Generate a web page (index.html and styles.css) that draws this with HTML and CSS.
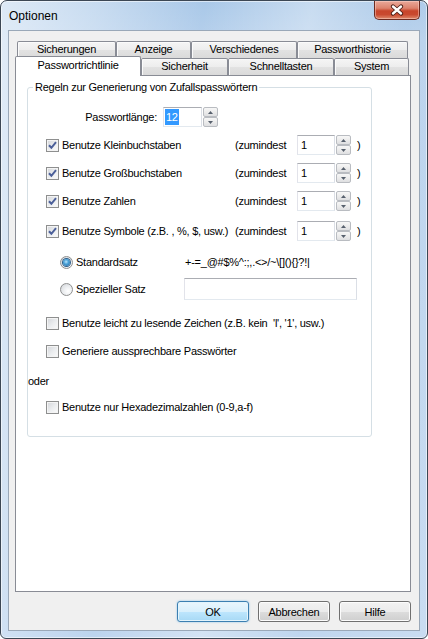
FILE: index.html
```html
<!DOCTYPE html>
<html lang="de">
<head>
<meta charset="utf-8">
<title>Optionen</title>
<link rel="stylesheet" href="styles.css">
</head>
<body>
<div class="window">
  <div class="titlebar">
    <span class="title">Optionen</span>
    <button class="close" aria-label="Schließen">
      <svg width="16" height="12" viewBox="0 0 16 12"><path d="M4 2.5 L12 9.5 M12 2.5 L4 9.5" stroke="#4a1d15" stroke-width="4.2" stroke-linecap="round"/><path d="M4 2.5 L12 9.5 M12 2.5 L4 9.5" stroke="#fff" stroke-width="2.4" stroke-linecap="round"/></svg>
    </button>
  </div>
  <div class="client">
    <div class="tabs">
      <div class="tabrow back">
        <div class="tab t-sicherungen">Sicherungen</div>
        <div class="tab t-anzeige">Anzeige</div>
        <div class="tab t-versch">Verschiedenes</div>
        <div class="tab t-historie">Passworthistorie</div>
      </div>
      <div class="tabrow front">
        <div class="tab active t-richtlinie">Passwortrichtlinie</div>
        <div class="tab t-sicherheit">Sicherheit</div>
        <div class="tab t-schnell">Schnelltasten</div>
        <div class="tab t-system">System</div>
      </div>
      <div class="panel">
        <fieldset class="group">
          <legend>Regeln zur Generierung von Zufallspasswörtern</legend>

          <div class="row r-pw">
            <span class="pwlabel">Passwortlänge:</span>
            <div class="field pwfield"><span class="sel">12</span></div>
            <div class="spin"><span class="sb"><svg width="5" height="3" viewBox="0 0 5 3"><path d="M0 3 L2.5 0 L5 3Z" fill="#57606d"/></svg></span><span class="sb"><svg width="5" height="3" viewBox="0 0 5 3"><path d="M0 0 L2.5 3 L5 0Z" fill="#57606d"/></svg></span></div>
          </div>

          <div class="row cbrow r-c1">
            <label class="opt"><span class="cb"><svg width="11" height="11" viewBox="0 0 11 11"><path d="M2 5.2 L4.4 7.8 L9 2.2" fill="none" stroke="#4b5f99" stroke-width="2"/></svg></span><span>Benutze Kleinbuchstaben</span></label>
            <span class="zum">(zumindest</span>
            <div class="field num">1</div>
            <div class="spin"><span class="sb"><svg width="5" height="3" viewBox="0 0 5 3"><path d="M0 3 L2.5 0 L5 3Z" fill="#57606d"/></svg></span><span class="sb"><svg width="5" height="3" viewBox="0 0 5 3"><path d="M0 0 L2.5 3 L5 0Z" fill="#57606d"/></svg></span></div>
            <span class="paren">)</span>
          </div>

          <div class="row cbrow r-c2">
            <label class="opt"><span class="cb"><svg width="11" height="11" viewBox="0 0 11 11"><path d="M2 5.2 L4.4 7.8 L9 2.2" fill="none" stroke="#4b5f99" stroke-width="2"/></svg></span><span>Benutze Großbuchstaben</span></label>
            <span class="zum">(zumindest</span>
            <div class="field num">1</div>
            <div class="spin"><span class="sb"><svg width="5" height="3" viewBox="0 0 5 3"><path d="M0 3 L2.5 0 L5 3Z" fill="#57606d"/></svg></span><span class="sb"><svg width="5" height="3" viewBox="0 0 5 3"><path d="M0 0 L2.5 3 L5 0Z" fill="#57606d"/></svg></span></div>
            <span class="paren">)</span>
          </div>

          <div class="row cbrow r-c3">
            <label class="opt"><span class="cb"><svg width="11" height="11" viewBox="0 0 11 11"><path d="M2 5.2 L4.4 7.8 L9 2.2" fill="none" stroke="#4b5f99" stroke-width="2"/></svg></span><span>Benutze Zahlen</span></label>
            <span class="zum">(zumindest</span>
            <div class="field num">1</div>
            <div class="spin"><span class="sb"><svg width="5" height="3" viewBox="0 0 5 3"><path d="M0 3 L2.5 0 L5 3Z" fill="#57606d"/></svg></span><span class="sb"><svg width="5" height="3" viewBox="0 0 5 3"><path d="M0 0 L2.5 3 L5 0Z" fill="#57606d"/></svg></span></div>
            <span class="paren">)</span>
          </div>

          <div class="row cbrow r-c4">
            <label class="opt"><span class="cb"><svg width="11" height="11" viewBox="0 0 11 11"><path d="M2 5.2 L4.4 7.8 L9 2.2" fill="none" stroke="#4b5f99" stroke-width="2"/></svg></span><span>Benutze Symbole (z.B. , %, $, usw.)</span></label>
            <span class="zum">(zumindest</span>
            <div class="field num">1</div>
            <div class="spin"><span class="sb"><svg width="5" height="3" viewBox="0 0 5 3"><path d="M0 3 L2.5 0 L5 3Z" fill="#57606d"/></svg></span><span class="sb"><svg width="5" height="3" viewBox="0 0 5 3"><path d="M0 0 L2.5 3 L5 0Z" fill="#57606d"/></svg></span></div>
            <span class="paren">)</span>
          </div>

          <div class="row rbrow r-r1">
            <label class="opt2"><span class="rb on"><span class="dot"></span></span><span>Standardsatz</span></label>
            <span class="symbols">+-=_@#$%^:;,.&lt;&gt;/~\[](){}?!|</span>
          </div>

          <div class="row rbrow r-r2">
            <label class="opt2"><span class="rb"></span><span>Spezieller Satz</span></label>
            <div class="field wide"></div>
          </div>

          <div class="row cbrow r-c5">
            <label class="opt"><span class="cb"></span><span>Benutze leicht zu lesende Zeichen (z.B. kein &nbsp;'l', '1', usw.)</span></label>
          </div>

          <div class="row cbrow r-c6">
            <label class="opt"><span class="cb"></span><span>Generiere aussprechbare Passwörter</span></label>
          </div>

          <div class="row r-oder">oder</div>

          <div class="row cbrow r-c7">
            <label class="opt"><span class="cb"></span><span>Benutze nur Hexadezimalzahlen (0-9,a-f)</span></label>
          </div>
        </fieldset>
      </div>
    </div>
    <div class="buttons">
      <button class="btn default">OK</button>
      <button class="btn">Abbrechen</button>
      <button class="btn">Hilfe</button>
    </div>
  </div>
</div>
</body>
</html>
```

FILE: styles.css
```css
* { box-sizing: border-box; }
html, body { margin: 0; padding: 0; }
body {
  width: 428px;
  height: 639px;
  overflow: hidden;
  background: #ffffff;
  font-family: "Liberation Sans", Arial, sans-serif;
  font-size: 11px;
  letter-spacing: -0.25px;
  color: #000;
}

.window {
  width: 428px;
  height: 639px;
  border: 1px solid #3c4754;
  border-radius: 7px 7px 6px 6px;
  background:
    linear-gradient(100deg, rgba(255,255,255,0.6) 0%, rgba(255,255,255,0.35) 18%, rgba(255,255,255,0) 38%, rgba(255,255,255,0.35) 58%, rgba(255,255,255,0.05) 76%, rgba(255,255,255,0.2) 100%),
    linear-gradient(180deg, #a9c8e8 0%, #b6d0ec 6%, #bcd4ee 100%);
  box-shadow: inset 0 0 0 1px rgba(255,255,255,0.55);
  display: flex;
  flex-direction: column;
}

.titlebar {
  height: 29px;
  display: flex;
  align-items: flex-start;
  flex: none;
}
.title {
  margin: 8px 0 0 8px;
  font-size: 12px;
  line-height: 15px;
  letter-spacing: 0;
  color: #000;
}
.close {
  margin: 0 7px 0 auto;
  width: 46px;
  height: 19px;
  padding: 0;
  border: 1px solid #6b2a20;
  border-top: none;
  border-radius: 0 0 5px 5px;
  background: linear-gradient(180deg, #e9a99a 0%, #dc826d 40%, #c8452b 55%, #c9492f 75%, #df8a6c 100%);
  box-shadow: inset 0 0 0 1px rgba(255,220,210,0.45);
  display: flex;
  align-items: center;
  justify-content: center;
}

.client {
  flex: 1;
  margin: 0 7px 7px 7px;
  border: 1px solid #9aa8b8;
  background: #f0f0f0;
  padding: 10px 8px 0 6px;
  display: flex;
  flex-direction: column;
}

.tabs { width: 396px; }
.tabrow {
  display: flex;
  height: 17px;
}
.tabrow.back { padding-left: 2px; }
.tabrow.front { align-items: flex-end; }

.tab {
  height: 17px;
  border: 1px solid #898c95;
  border-bottom: none;
  border-radius: 2px 2px 0 0;
  background: linear-gradient(180deg, #f5f5f5 0%, #ededed 50%, #e2e2e2 51%, #dadada 100%);
  box-shadow: inset 1px 1px 0 #fbfbfb;
  text-align: center;
  line-height: 15px;
  white-space: nowrap;
  flex: none;
}
.tab.active {
  position: relative;
  z-index: 2;
  height: 20px;
  margin-bottom: -1px;
  background: #ffffff;
  box-shadow: none;
  line-height: 17px;
}
.t-sicherungen { width: 99px; }
.t-anzeige { width: 75px; }
.t-versch { width: 106px; }
.t-historie { width: 111px; }
.t-richtlinie { width: 126px; }
.t-sicherheit { width: 87px; }
.t-schnell { width: 106px; }
.t-system { width: 75px; }

.panel {
  height: 517px;
  border: 1px solid #898c95;
  background: #ffffff;
  padding: 0;
}

.group {
  margin: 5px 0 0 11px;
  padding: 0;
  width: 345px;
  height: 356px;
  border: 1px solid #d5dfe5;
  border-radius: 3px;
  min-width: 0;
}
.group legend {
  margin-left: 5px;
  padding: 0 2px;
  line-height: 13px;
}

.row {
  display: flex;
  align-items: center;
}
.r-pw { margin-top: 13px; height: 20px; }
.cbrow { height: 20px; padding-left: 18px; }
.r-c1 { margin-top: 8px; }
.r-c2 { margin-top: 8px; }
.r-c3 { margin-top: 8px; }
.r-c4 { margin-top: 10px; }
.rbrow { padding-left: 32px; }
.r-r1 { margin-top: 13px; height: 16px; }
.r-r2 { margin-top: 8px; height: 22px; }
.r-c5 { margin-top: 13px; }
.r-c6 { margin-top: 8px; }
.r-oder { margin-top: 13px; height: 14px; padding-left: 0; }
.r-c7 { margin-top: 9px; }

.pwlabel {
  width: 129px;
  text-align: right;
}
.field {
  height: 20px;
  border: 1px solid;
  border-color: #abadb3 #dbdfe6 #e3e9ef #e2e3ea;
  background: #fff;
  padding-left: 3px;
  display: flex;
  align-items: center;
  flex: none;
}
.pwfield { width: 39px; margin-left: 6px; padding-left: 1px; }
.sel {
  background: #3399ff;
  color: #fff;
  padding: 1px 1px;
  line-height: 14px;
}
.num { width: 38px; }
.wide { width: 173px; height: 22px; }

.spin {
  width: 15px;
  height: 20px;
  margin-left: 1px;
  display: flex;
  flex-direction: column;
  flex: none;
}
.sb {
  flex: 1;
  border: 1px solid #b9bcc1;
  border-radius: 2px;
  background: linear-gradient(180deg, #f7f7f7 0%, #ececec 50%, #dedfe1 100%);
  display: flex;
  align-items: center;
  justify-content: center;
}

.opt {
  width: 189px;
  display: flex;
  align-items: center;
  gap: 3px;
  white-space: nowrap;
  flex: none;
}
.r-c5 .opt, .r-c6 .opt, .r-c7 .opt { width: auto; }
.zum { width: 62px; flex: none; }
.paren { margin-left: 6px; }

.cb {
  width: 13px;
  height: 13px;
  border: 1px solid #8e8f8f;
  background: linear-gradient(135deg, #d3d5d9 0%, #eceef0 55%, #fbfbfb 100%);
  box-shadow: inset 0 0 0 1px #f4f4f4;
  display: flex;
  align-items: center;
  justify-content: center;
  flex: none;
}

.opt2 {
  width: 124px;
  display: flex;
  align-items: center;
  gap: 3px;
  flex: none;
}
.rb {
  width: 13px;
  height: 13px;
  border-radius: 50%;
  border: 1px solid #8e8f8f;
  background: radial-gradient(circle at 65% 65%, #ffffff 0%, #eef0f2 40%, #cfd2d6 100%);
  display: flex;
  align-items: center;
  justify-content: center;
  flex: none;
}
.dot {
  width: 7px;
  height: 7px;
  border-radius: 50%;
  background: radial-gradient(circle at 45% 40%, #b9e4fb 0%, #4aa2d8 40%, #1c5f98 100%);
  box-shadow: 0 0 0 1px #2d5f8b;
}
.symbols { padding-left: 1px; }

.buttons {
  margin-top: 9px;
  display: flex;
  justify-content: flex-end;
  gap: 9px;
}
.btn {
  width: 72px;
  height: 21px;
  padding: 0;
  border: 1px solid #707070;
  border-radius: 3px;
  background: linear-gradient(180deg, #f2f2f2 0%, #ebebeb 50%, #dddddd 51%, #cfcfcf 100%);
  box-shadow: inset 0 0 0 1px #fcfcfc;
  font-family: "Liberation Sans", Arial, sans-serif;
  font-size: 11px;
  letter-spacing: -0.25px;
  color: #000;
}
.btn.default {
  border-color: #3c7fb1;
  background: linear-gradient(180deg, #eaf6fd 0%, #d9f0fc 50%, #bee6fd 51%, #a7d9f5 100%);
  box-shadow: inset 0 0 0 1px #e3f4fc, 0 0 2px rgba(60,160,230,0.6);
}
```
